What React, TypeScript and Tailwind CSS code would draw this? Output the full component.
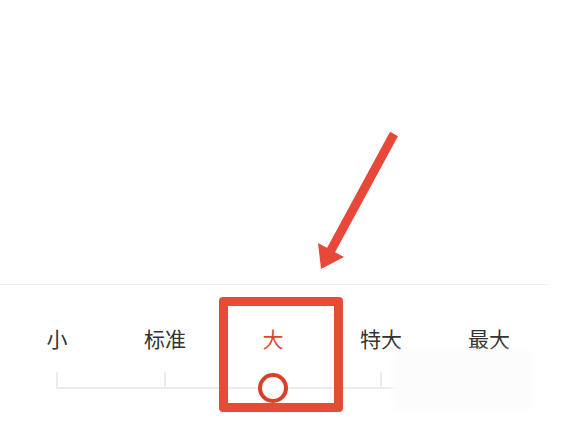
import React from 'react';

const sizes = ['小', '标准', '大', '特大', '最大'];
const selected = 2;

const App = () => {
    return (
        <div className="relative w-[572px] h-[424px] bg-white overflow-hidden font-['Noto_Sans_CJK_SC',sans-serif]">
            <div className="h-[284px]" />
            <div className="w-[549px] border-t border-[#efefef]">
                <div className="grid grid-cols-[repeat(5,108px)] pl-[3px] pt-[41px]">
                    {sizes.map((s, i) => (
                        <div
                            key={s}
                            className={`text-center text-[21px] leading-[24px] ${i === selected ? 'text-[#d9472f]' : 'text-[#333333]'}`}
                        >
                            {s}
                        </div>
                    ))}
                </div>
                {/* slider track */}
                <div className="relative ml-[56px] w-[434px] mt-[22px] h-[17px] flex justify-between items-end border-b-2 border-[#ececec]">
                    {sizes.map((s) => (
                        <div key={s} className="w-[2px] h-[15px] bg-[#ececec]" />
                    ))}
                    <div className="absolute left-[202px] top-[1px] w-[30px] h-[30px] rounded-full border-[4px] border-[#d9402a] bg-white" />
                </div>
            </div>

            {/* highlight box */}
            <div className="absolute left-[219px] top-[297px] w-[124px] h-[115px] border-[9px] border-[#e64b36] rounded-[4px]" />

            {/* arrow */}
            <svg className="absolute left-0 top-0" width="572" height="424" viewBox="0 0 572 424">
                <line x1="394" y1="134" x2="330" y2="252" stroke="#e8483a" strokeWidth="9" />
                <polygon points="321,269 318,243 344,257" fill="#e8483a" />
            </svg>

            {/* blurred patch */}
            <div className="absolute left-[392px] top-[351px] w-[142px] h-[58px] bg-[#fcfcfc] blur-[3px]" />
        </div>
    );
};

export default App;
